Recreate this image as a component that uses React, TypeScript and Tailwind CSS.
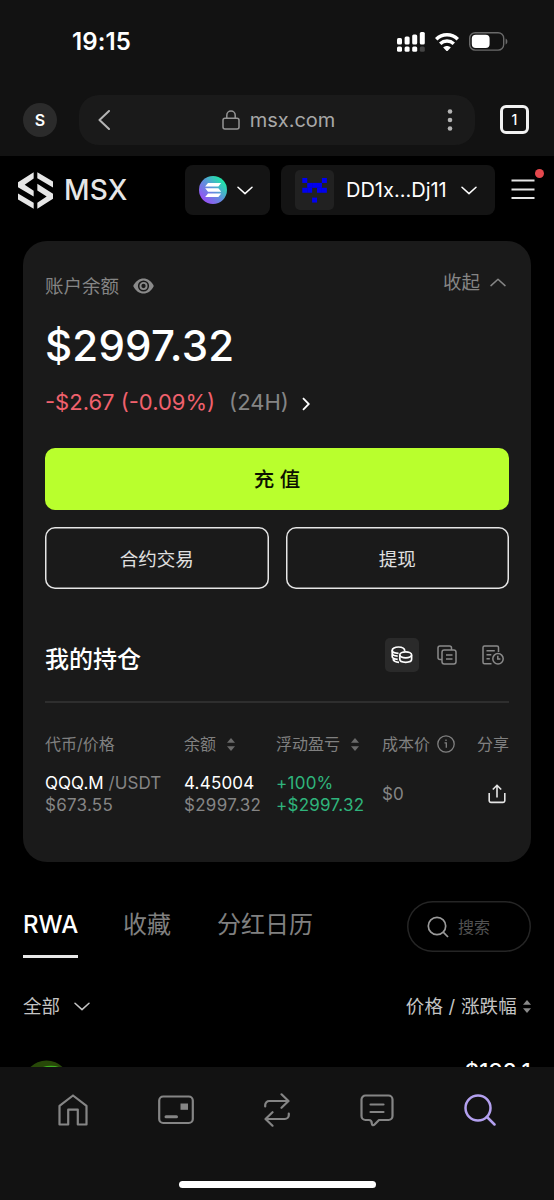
import type { ReactNode } from "react";

const cn = (...parts: (string | undefined)[]) => parts.filter(Boolean).join(" ");

const Chevron = ({ className, d = "M1 1.2 8 7.6 15 1.2" }: { className?: string; d?: string }) => (
  <svg viewBox="0 0 16 9" className={cn("h-[9px] w-4 shrink-0", className)} fill="none" stroke="currentColor" strokeWidth="1.5">
    <path d={d} strokeLinecap="round" strokeLinejoin="round" />
  </svg>
);

const SortCaret = ({ className }: { className?: string }) => (
  <svg viewBox="0 0 8 13" className={cn("h-[13px] w-2 shrink-0", className)} fill="currentColor">
    <path d="M4 0 8 4.8H0z" />
    <path d="M4 13 0 8.2h8z" />
  </svg>
);

const StatusBar = () => (
  <div className="flex h-[83px] items-center justify-between pl-[72px] pr-[46px] text-white">
    <span className="text-[24px] font-semibold leading-none tracking-[0.1px]">19:15</span>
    <div className="flex items-center gap-[10px]">
      <svg viewBox="0 0 28 20" className="h-5 w-7" fill="white">
        <rect x="0" y="6" width="5" height="6.5" rx="1.5" />
        <rect x="7.6" y="4.5" width="5" height="8" rx="1.5" />
        <rect x="15.2" y="2.5" width="5" height="10" rx="1.5" />
        <rect x="22.8" y="0" width="5" height="12.5" rx="1.5" />
        <rect x="0" y="14.5" width="5" height="5.3" rx="1.5" />
        <rect x="7.6" y="14.5" width="5" height="5.3" rx="1.5" />
        <rect x="15.2" y="14.5" width="5" height="5.3" rx="1.5" />
        <rect x="22.8" y="14.5" width="5" height="5.3" rx="1.5" fill="#444" />
      </svg>
      <svg viewBox="0 0 24 18" className="h-[18px] w-6" fill="none" stroke="white" strokeWidth="3.5">
        <path d="M1.2 6.2C7.2.4 16.800.4 22.800 6.200" />
        <path d="M5.200 10.800c3.900-3.600 9.700-3.600 13.600 0" />
        <path d="M12 18.500 8.200 14.500c2.200-2 5.400-2 7.600 0z" fill="white" stroke="none" />
      </svg>
      <svg viewBox="0 0 39 19" className="h-[19px] w-[39px]">
        <rect x=".7" y=".7" width="34" height="17.4" rx="5.6" fill="none" stroke="#6a6a6a" strokeWidth="1.4" />
        <rect x="2.8" y="2.8" width="17.8" height="13.2" rx="4" fill="white" />
        <path d="M36.6 6.4c2.4 1 2.4 5 0 6z" fill="#6a6a6a" />
      </svg>
    </div>
  </div>
);

const AddressBar = () => (
  <div className="flex h-[73px] items-start pl-[23px] pr-[25px] pt-[12px]">
    <div className="mt-2 flex size-[34px] items-center justify-center rounded-full bg-[#2b2b2b] text-base font-semibold text-white">S</div>
    <div className="ml-[22px] flex h-[50px] w-[396px] items-center justify-between rounded-[20px] bg-[#1a1a1a] pl-[19px] pr-[22px] text-[#b4b4b4]">
      <svg viewBox="0 0 12 20" className="h-5 w-3" fill="none" stroke="currentColor" strokeWidth="2">
        <path d="M11 1 1.5 10 11 19" strokeLinecap="round" strokeLinejoin="round" />
      </svg>
      <div className="flex items-center gap-[10px]">
        <svg viewBox="0 0 18 20" className="h-5 w-[18px]" fill="none" stroke="#949494" strokeWidth="1.5">
          <rect x="1" y="8.3" width="16" height="10.7" rx="2" />
          <path d="M4.8 8.3V5.2a4.2 4.2 0 0 1 8.4 0v3.1" />
        </svg>
        <span className="text-[20px] leading-none text-[#a8a8a8]">msx.com</span>
      </div>
      <svg viewBox="0 0 6 22" className="h-[22px] w-1.5" fill="currentColor">
        <circle cx="3" cy="2.5" r="2.3" />
        <circle cx="3" cy="11" r="2.3" />
        <circle cx="3" cy="19.5" r="2.3" />
      </svg>
    </div>
    <div className="ml-[25px] mt-[10px] flex h-[29px] w-[29px] items-center justify-center rounded-[6px] border-[3px] border-[#f2f2f2] text-[14px] font-medium text-white">
      1
    </div>
  </div>
);

// filled cells of the 5x5 identicon, as [column, row]
const IDENTICON_CELLS = [
  [0, 0], [4, 0],
  [1, 1], [2, 1], [3, 1],
  [0, 2], [1, 2], [3, 2], [4, 2],
  [2, 4],
];

const SiteHeader = () => (
  <header className="flex h-[85px] items-start pl-[18px] pt-[9px]">
    <div className="flex h-[50px] w-[167px] items-center gap-[11px] text-[#e6e6e6]">
      <svg viewBox="55 48 105 110" className="h-[37px] w-[35px]" fill="currentColor">
        <path d="M102 48v19L75 86l27 18v17L55 93V78z" />
        <path d="M55 112l47 28v18l-47-28z" />
        <path d="M113 48l47 28v18l-47-28z" />
        <path d="M113 158v-18l28-19-28-18V83l47 30v15z" />
      </svg>
      <span className="text-[28px] font-medium leading-none tracking-[0.2px]">MSX</span>
    </div>
    <button className="flex h-[50px] w-[85px] items-center gap-[10px] rounded-lg bg-[#141414] pl-[14px] text-white">
      <svg viewBox="0 0 28 28" className="size-7">
        <defs>
          <linearGradient id="sol" x1="4" y1="24" x2="24" y2="4" gradientUnits="userSpaceOnUse">
            <stop offset="0" stopColor="#9650f5" />
            <stop offset=".5" stopColor="#5f92dc" />
            <stop offset="1" stopColor="#1de9a6" />
          </linearGradient>
        </defs>
        <circle cx="14" cy="14" r="14" fill="url(#sol)" />
        <g fill="white">
          <path d="M9 7h13.2l-2.8 3.5H6.2z" />
          <path d="M6.2 12.2h13.2l2.8 3.5H9z" />
          <path d="M9 17.4h13.2l-2.8 3.5H6.2z" />
        </g>
      </svg>
      <Chevron />
    </button>
    <button className="ml-[11px] flex h-[50px] w-[214px] items-center rounded-lg bg-[#141414] pl-[14px] text-white">
      <svg viewBox="0 0 39 40" className="h-10 w-[39px]">
        <rect width="39" height="40" rx="5" fill="#212121" />
        {IDENTICON_CELLS.map(([col, row]) => (
          <rect key={`${col}-${row}`} x={7.3 + col * 4.9} y={8 + row * 4.9} width="4.95" height="4.95" fill="#0000f0" />
        ))}
      </svg>
      <span className="ml-[12px] w-[102px] text-left text-[20px] leading-none">DD1x...Dj11</span>
      <Chevron className="ml-[13px]" />
    </button>
    <div className="relative ml-[16px] mt-[14px]">
      <svg viewBox="0 0 24 20" className="h-5 w-6" stroke="#e5e5e5" strokeWidth="1.9">
        <path d="M.5 1.5h23M.5 10.5h23M.5 19h23" />
      </svg>
      <span className="absolute -top-[10px] left-[24px] size-[9px] rounded-full bg-[#e5484d]" />
    </div>
  </header>
);

const EyeIcon = () => (
  <svg viewBox="0 0 21 16" className="h-4 w-[21px]">
    <path d="M.2 8C4.800-2 16.200-2 20.800 8 16.200 18 4.800 18 .2 8z" fill="#8a8a8a" />
    <circle cx="10.500" cy="8" r="5.600" fill="#1a1a1a" />
    <circle cx="10.500" cy="8" r="3.100" fill="none" stroke="#8a8a8a" strokeWidth="1.900" />
  </svg>
);

const CoinsIcon = () => (
  <svg viewBox="0 0 22 18" className="h-[18px] w-[22px]" fill="none" stroke="white" strokeWidth="1.7">
    <path d="M13.8 4.800C13.600 2.600 11.200 1 7.500 1 3.800 1 1.200 2.500 1.200 4.300c0 1.700 2.600 3 6.300 3" />
    <path d="M1.200 4.300v3c0 1.700 2.300 2.700 5.500 2.900M1.200 7.800v2.800c0 1.500 2.300 2.500 5.500 2.700M2 13c.6 2.200 3 3.200 6 3.300" />
    <ellipse cx="14.700" cy="8.800" rx="5.900" ry="3" />
    <path d="M8.800 9v4.300c0 1.800 2.600 3 5.900 3s5.900-1.200 5.900-3V9" />
  </svg>
);

const CopyIcon = () => (
  <svg viewBox="0 0 20 20" className="size-5" fill="none" stroke="#8a8a8a" strokeWidth="1.500">
    <rect x="5" y="5" width="14" height="14" rx="2.200" />
    <path d="M5 14.500H3a2 2 0 0 1-2-2V3a2 2 0 0 1 2-2h9.500a2 2 0 0 1 2 2v2M9 10h6.500M9 14h6.500" />
  </svg>
);

const OrderHistoryIcon = () => (
  <svg viewBox="0 0 22 20" className="h-5 w-[22px]" fill="none" stroke="#8a8a8a" strokeWidth="1.500">
    <path d="M9.500 18.800H2.500A1.500 1.500 0 0 1 1 17.300V2.500A1.500 1.500 0 0 1 2.500 1H15a1.500 1.500 0 0 1 1.500 1.500V7M4.500 5.800h8.300M4.500 9.800h4.800M4.500 13.800h3.300" />
    <circle cx="16" cy="13.800" r="5.200" />
    <path d="M15.800 10.800v3.300h2.600" />
  </svg>
);

const SortHeader = ({ children }: { children: ReactNode }) => (
  <span className="flex items-center gap-[11px]">
    {children}
    <SortCaret className="text-[#6b6b6b]" />
  </span>
);

const Holdings = () => (
  <div className="mt-[48px]">
    <div className="flex h-[36px] items-center">
      <h2 className="mt-[10px] text-2xl font-medium leading-none text-white">我的持仓</h2>
      <div className="ml-auto flex size-[34px] items-center justify-center rounded-[5px] bg-[#2a2a2a]">
        <CoinsIcon />
      </div>
      <div className="ml-[18px]">
        <CopyIcon />
      </div>
      <div className="ml-[25px] mr-[5px]">
        <OrderHistoryIcon />
      </div>
    </div>
    <div className="mt-[28px] h-[2px] bg-[#2e2e2e]" />
    <div className="mt-[30px] grid grid-cols-[139px_92px_106px_1fr] text-base leading-[22px] text-[#808080]">
      <span>代币/价格</span>
      <SortHeader>余额</SortHeader>
      <SortHeader>浮动盈亏</SortHeader>
      <div className="flex items-center justify-between">
        <span className="flex items-center gap-[7px]">
          成本价
          <svg viewBox="0 0 18 18" className="size-[18px]" fill="none" stroke="currentColor" strokeWidth="1.300">
            <circle cx="9" cy="9" r="8.200" />
            <path d="M7.500 7.800h1.800v5M9 4.500v1.500" />
          </svg>
        </span>
        <span>分享</span>
      </div>
    </div>
    <div className="mt-[17px] grid grid-cols-[139px_92px_106px_1fr] items-center text-[17px] leading-[22px] text-[#858585]">
      <div className="whitespace-nowrap">
        <div className="tracking-[0.05px]">
          <span className="text-white">QQQ.M</span> /USDT
        </div>
        <div className="tracking-[0.250px]">$673.55</div>
      </div>
      <div className="tracking-[0.300px]">
        <div className="tracking-[0.200px] text-white">4.45004</div>
        <div>$2997.32</div>
      </div>
      <div className="tracking-[0.250px] text-[#2fb47c]">
        <div>+100%</div>
        <div>+$2997.32</div>
      </div>
      <div className="flex items-center justify-between pr-[3px]">
        <span>$0</span>
        <svg viewBox="0 0 18 20" className="h-5 w-[18px]" fill="none" stroke="#e5e5e5" strokeWidth="1.600">
          <path d="M1.200 9v7.600a1.800 1.800 0 0 0 1.800 1.800h12a1.800 1.800 0 0 0 1.800-1.800V9M9 13.500V1.500M4.800 5.500 9 1.300l4.200 4.200" />
        </svg>
      </div>
    </div>
  </div>
);

const BalanceCard = () => (
  <section className="mx-[23px] h-[621px] rounded-[24px] bg-[#1a1a1a] px-[22px] pt-[30px]">
    <div className="flex h-[30px] items-center justify-between text-[18.500px] leading-none text-[#858585]">
      <div className="flex items-center gap-[14px]">
        账户余额
        <EyeIcon />
      </div>
      <div className="mb-2 mr-[3px] flex items-center gap-[10px]">
        收起
        <Chevron d="M1 7.600 8 1.200 15 7.600" />
      </div>
    </div>
    <div className="mt-[19px] text-[42px] font-medium leading-[52px] tracking-[0.2px] text-white">$2997.32</div>
    <div className="mt-[15px] flex h-[30px] items-center text-[22px] leading-none">
      <span className="text-[#f0616d]">-$2.67 (-0.09%)</span>
      <span className="ml-[14px] text-[#858585]">(24H)</span>
      <svg viewBox="0 0 8 14" className="ml-[13px] mt-[3px] h-[14px] w-2" fill="none" stroke="white" strokeWidth="1.800">
        <path d="M1 1.200 6.800 7 1 12.800" />
      </svg>
    </div>
    <button className="mt-[31px] block h-[62px] w-full rounded-[10px] bg-[#b9ff2d] pt-[3px] text-[20.500px] font-medium text-[#0c1200]">充 值</button>
    <div className="mt-[17px] grid grid-cols-2 gap-[17px] text-[18.500px] text-[#e0e0e0]">
      <button className="h-[62px] rounded-[10px] pt-[3px] shadow-[inset_0_0_0_1.5px_#e6e6e6]">合约交易</button>
      <button className="h-[62px] rounded-[10px] pt-[3px] shadow-[inset_0_0_0_1.5px_#e6e6e6]">提现</button>
    </div>
    <Holdings />
  </section>
);

const MarketTabs = () => (
  <div className="mt-[39px] flex h-[57px] items-start px-[23px] text-2xl text-[#808080]">
    <div className="h-[57px] w-[55px] border-b-[3px] border-[#e8e8e8] font-medium leading-[47px] text-white">RWA</div>
    <div className="ml-[45px] leading-[48px]">收藏</div>
    <div className="ml-[46px] leading-[48px]">分红日历</div>
    <div className="ml-auto flex h-[51px] w-[124px] items-center gap-[9px] rounded-full pl-[20px] text-base text-[#525252] shadow-[inset_0_0_0_1.5px_#252525]">
      <svg viewBox="0 0 22 22" className="size-[22px]" fill="none" stroke="#9a9a9a" strokeWidth="1.700">
        <circle cx="10" cy="10" r="8.700" />
        <path d="M16.200 16.200 21 21" />
      </svg>
      <span className="pt-px">搜索</span>
    </div>
  </div>
);

const MarketList = () => (
  <>
    <div className="mt-[35px] flex h-[26px] items-center justify-between px-[23px] text-[18.500px] leading-none text-[#c4c4c4]">
      <span className="flex items-center gap-[14px]">
        全部
        <Chevron />
      </span>
      <span className="flex items-center gap-[6px]">
        <span className="tracking-[0.200px]">价格 / 涨跌幅</span>
        <SortCaret className="text-[#8a8a8a]" />
      </span>
    </div>
    <div className="mt-[41px] flex h-[7px] items-start justify-between overflow-hidden px-[23px]">
      <svg viewBox="0 0 47 47" className="size-[47px] shrink-0">
        <circle cx="23.500" cy="23.500" r="23" fill="#274808" />
        <ellipse cx="28" cy="12" rx="13" ry="6.300" fill="#3fae22" />
      </svg>
      <span className="text-[22px] font-medium leading-[22px] tracking-[0.3px] text-white">$198.1</span>
    </div>
  </>
);

const BottomNav = () => (
  <nav className="h-[133px] bg-[#121212]">
    <div className="flex h-[86px] items-center justify-between pl-[58px] pr-[58px] text-[#858585]">
      <svg viewBox="0 0 30 32" className="h-8 w-[30px]" fill="none" stroke="currentColor" strokeWidth="2.200" strokeLinejoin="round">
        <path d="M1.500 11.800 15 1.500l13.500 10.300V30.500h-8.700V15.700h-9.600v14.800H1.500z" />
      </svg>
      <svg viewBox="0 0 36 30" className="h-[30px] w-9" fill="none" stroke="currentColor" strokeWidth="2.200">
        <rect x="1.200" y="1.500" width="33.600" height="26.500" rx="4" />
        <path d="M22.500 8.500h7.500v6.300h-7.500z" fill="currentColor" stroke="none" />
        <path d="M8 21.700h10.500" strokeWidth="3" strokeLinecap="round" />
      </svg>
      <svg viewBox="0 0 26 34" className="h-[34px] w-[26px]" fill="none" stroke="currentColor" strokeWidth="2.200" strokeLinecap="round" strokeLinejoin="round">
        <path d="M1.200 13.500V12a4 4 0 0 1 4-4h19M17.500 1.300 24.500 8l-7 6.800M24.800 20.500V22a4 4 0 0 1-4 4h-19M8.500 19.200 1.500 26l7 6.700" />
      </svg>
      <svg viewBox="0 0 34 33" className="h-[33px] w-[34px]" fill="none" stroke="currentColor" strokeWidth="2.200" strokeLinecap="round" strokeLinejoin="round">
        <path d="M5.500 1.500h23a4 4 0 0 1 4 4V22a4 4 0 0 1-4 4H19l-4.200 4.300c-1.500 1.500-3 .9-3-.8 0-2-.8-3.500-3-3.500H5.500a4 4 0 0 1-4-4V5.500a4 4 0 0 1 4-4z" />
        <path d="M10.500 10.500h13M10.500 18h13" />
      </svg>
      <svg viewBox="0 0 32 32" className="size-8" fill="none" stroke="#b3a0ef" strokeWidth="2.500" strokeLinecap="round">
        <circle cx="14" cy="14" r="12.500" />
        <path d="M23 23l7.500 7.500" />
      </svg>
    </div>
    <div className="mx-auto mt-[28px] h-[7px] w-[197px] rounded-full bg-white" />
  </nav>
);

export default function App() {
  return (
    <div className="flex h-[1200px] w-[554px] flex-col overflow-hidden bg-black font-['Inter','Noto_Sans_CJK_SC',sans-serif]">
      <div className="bg-[#121212]">
        <StatusBar />
        <AddressBar />
      </div>
      <SiteHeader />
      <BalanceCard />
      <MarketTabs />
      <MarketList />
      <BottomNav />
    </div>
  );
}
